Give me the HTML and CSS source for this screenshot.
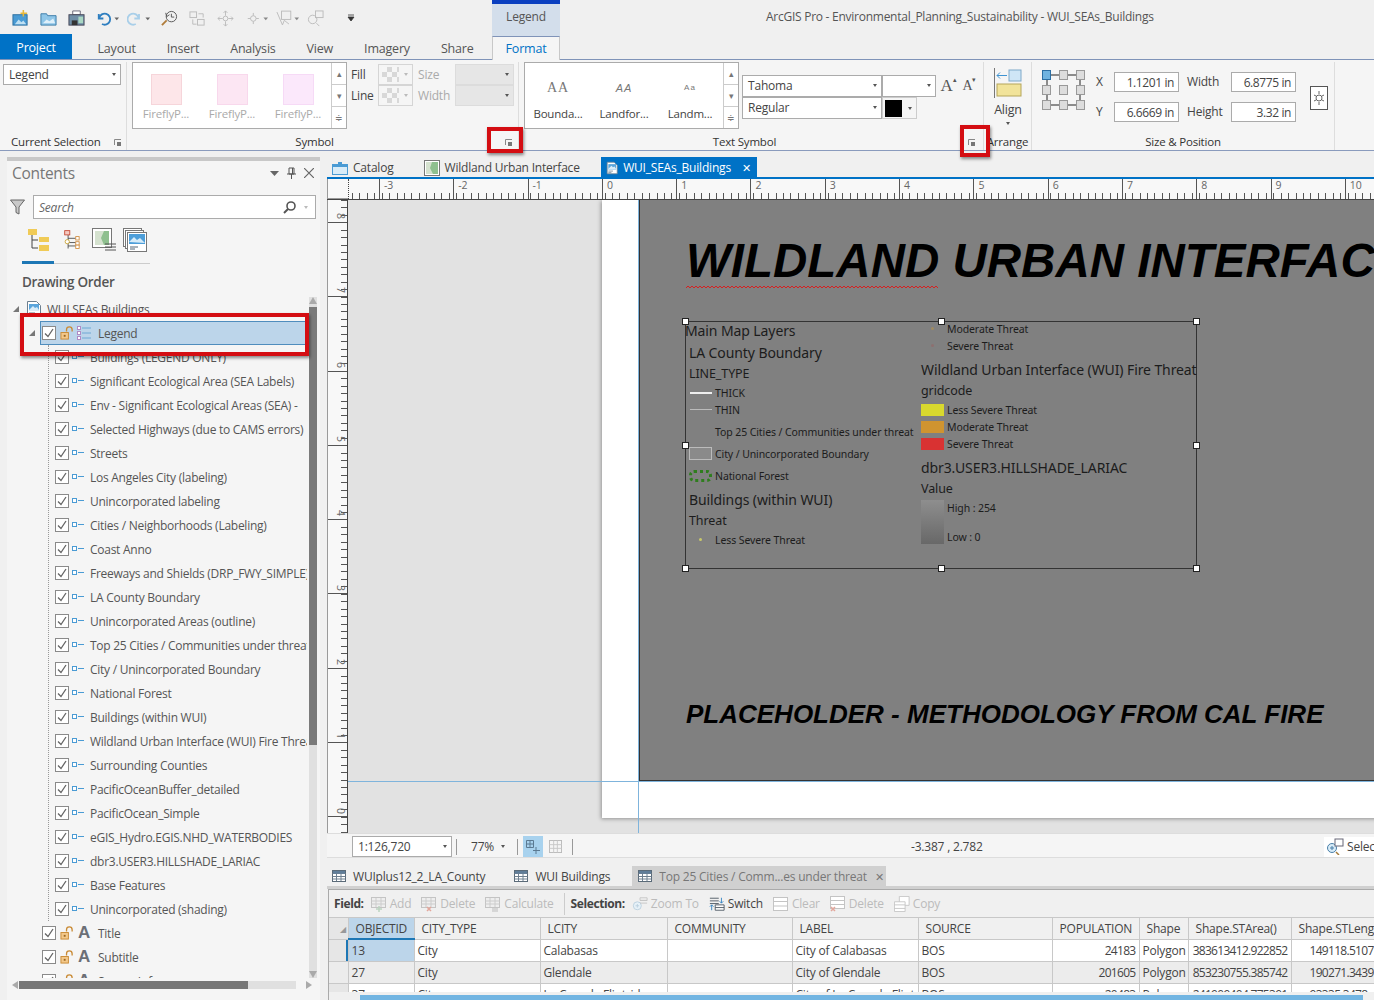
FILE: index.html
```html
<!DOCTYPE html>
<html lang="en">
<head>
  <meta charset="UTF-8">
  <title>ArcGIS Pro - Environmental_Planning_Sustainability - WUI_SEAs_Buildings</title>
  <link rel="stylesheet" href="styles.css">
</head>
<body>

<svg class="defs" width="0" height="0">
  <symbol id="chk" viewBox="0 0 14 14"><rect x=".5" y=".5" width="13" height="13" fill="#fff" stroke="#8a8a8a"/><path d="M3 7.500l3 3 5-7.500" fill="none" stroke="#666" stroke-width="1.300"/></symbol>
  <symbol id="lyr" viewBox="0 0 14 14"><rect x="1.500" y="4.500" width="4" height="4" fill="#fff" stroke="#4a9bd4"/><path d="M7 6.500h6" stroke="#4a9bd4"/></symbol>
  <symbol id="lock" viewBox="0 0 15 15"><rect x="1" y="7" width="8" height="7" fill="#f3c88a" stroke="#c98a34"/><path d="M7 6V4a3 3 0 0 1 6 0v2" fill="none" stroke="#c98a34" stroke-width="1.400"/><rect x="4" y="9.500" width="2" height="2" fill="#9a6620"/></symbol>
  <symbol id="tbl" viewBox="0 0 14 14"><rect x=".5" y="1.500" width="13" height="11" fill="#fff" stroke="#5a6a78"/><path d="M.5 4.500h13M.5 7.500h13M.5 10h13M4.500 2v10M9 2v10" stroke="#6f8090" fill="none"/><rect x="1" y="2" width="12" height="2.500" fill="#5f7d99"/></symbol>
  <symbol id="launch" viewBox="0 0 8 8"><path d="M.5 6V.5H7" fill="none" stroke="#888"/><rect x="3" y="3" width="4" height="4" fill="#777"/></symbol>
  <symbol id="mapdoc" viewBox="0 0 16 16"><path d="M1.500.5h9l4 4v11h-13z" fill="#fff" stroke="#6d7f8f"/><rect x="3" y="3" width="10" height="7" fill="#5aa5dc"/><path d="M3 9l4-4 2 2 2-1 2 3v1H3z" fill="#d9ecf8"/><path d="M3 12h6M3 14h4" stroke="#6d7f8f"/></symbol>
  <symbol id="grayrow" viewBox="0 0 14 14"><rect x=".5" y=".5" width="13" height="13" fill="none" stroke="#b9b9b9"/><path d="M.5 5h13M.5 9h13M5 .5v13M9 .5v13" stroke="#c8c8c8"/></symbol>
  <symbol id="fadd" viewBox="0 0 16 16"><rect x=".5" y="1.500" width="14" height="10" fill="#eee" stroke="#c4c4c4"/><path d="M.5 5h14M.5 8h14M5 2v9M10 2v9" stroke="#ccc"/><path d="M8 10v6M5 13h6" stroke="#bcd3c0" stroke-width="1.500"/></symbol>
  <symbol id="fdel" viewBox="0 0 16 16"><rect x=".5" y="1.500" width="14" height="10" fill="#eee" stroke="#c4c4c4"/><path d="M.5 5h14M.5 8h14M5 2v9M10 2v9" stroke="#ccc"/><path d="M6 11l4 4M10 11l-4 4" stroke="#e2a79c" stroke-width="1.500"/></symbol>
  <symbol id="fcalc" viewBox="0 0 16 16"><rect x=".5" y="1.500" width="14" height="10" fill="#eee" stroke="#c4c4c4"/><path d="M.5 5h14M.5 8h14M5 2v9M10 2v9" stroke="#ccc"/><path d="M7 13h6M7 15h6" stroke="#bbb"/></symbol>
  <symbol id="szoom" viewBox="0 0 18 16"><circle cx="6" cy="10" r="4.500" fill="#e6f1f8" stroke="#b9cfdd"/><path d="M4 10h4M6 8v4" stroke="#b9cfdd"/><path d="M9 1h8v3H9zM9 4h8M9 7h8" fill="none" stroke="#c4c4c4"/></symbol>
  <symbol id="sswitch" viewBox="0 0 18 16"><path d="M1 1.500h10M1 4.500h10M1 7.500h10" stroke="#4a5560"/><path d="M7 9h10v6H7zM7 12h10" fill="#fff" stroke="#4a5560"/><path d="M14 1v6M12 5l2 2 2-2M3 15V9M1 11l2-2 2 2" fill="none" stroke="#2f7fc0"/></symbol>
  <symbol id="sclear" viewBox="0 0 16 14"><rect x=".5" y=".5" width="14" height="13" fill="#fff" stroke="#c4c4c4"/><path d="M.5 4.500h14M.5 9h14" stroke="#c4c4c4"/></symbol>
  <symbol id="sdel" viewBox="0 0 16 16"><rect x=".5" y=".5" width="14" height="12" fill="#fff" stroke="#c4c4c4"/><path d="M.5 4.500h14M.5 8.500h14" stroke="#c4c4c4"/><path d="M1 11l4 4M5 11l-4 4" stroke="#e2a79c" stroke-width="1.500"/></symbol>
  <symbol id="scopy" viewBox="0 0 18 18"><path d="M6 .5h11v10H6z" fill="#fff" stroke="#c4c4c4"/><path d="M.5 6.500h12v11H.5z" fill="#fff" stroke="#c4c4c4"/><path d="M.5 10h12M.5 14h12" stroke="#c4c4c4"/></symbol>
</svg>

<div class="app">

  <!-- title bar + tabs -->
  <header class="topbar">
    <div class="qat">
      <svg class="qi" viewBox="0 0 18 18"><rect x="1" y="5" width="15" height="11" fill="#4a9bd4" stroke="#2d6f9f"/><path d="M3 15l4-5 3 3 2-2 3 4z" fill="#bfe0f3"/><path d="M12 0v7M9 3.500h7" stroke="#e8b93a" stroke-width="1.600"/></svg>
      <svg class="qi" viewBox="0 0 18 18"><path d="M1 4h6l1 2h9v10H1z" fill="#8fc6e8" stroke="#3a7ba8"/><path d="M3 14l4-4 3 2 4-3 2 5z" fill="#dff0fa"/></svg>
      <svg class="qi" viewBox="0 0 18 18"><path d="M5 1h8v4H5z" fill="#fff" stroke="#667"/><rect x="1" y="5" width="16" height="11" fill="#6f8ea6" stroke="#445"/><rect x="4" y="11" width="6" height="5" fill="#333"/><rect x="11" y="7" width="5" height="7" fill="#a9d7c3"/></svg>
      <svg class="qi wide" viewBox="0 0 26 18"><path d="M3 4v5h5" fill="none" stroke="#2f7fc0" stroke-width="2"/><path d="M3.500 8.500a6 6 0 1 1 3 6.500" fill="none" stroke="#2f7fc0" stroke-width="2"/><path d="M20 8h5l-2.500 3z" fill="#666"/></svg>
      <svg class="qi wide" viewBox="0 0 26 18"><path d="M13 4v5H8" fill="none" stroke="#a9cfe9" stroke-width="2"/><path d="M12.500 8.500a6 6 0 1 0-3 6.500" fill="none" stroke="#a9cfe9" stroke-width="2"/><path d="M20 8h5l-2.500 3z" fill="#666"/></svg>
      <svg class="qi hist" viewBox="0 0 18 18"><circle cx="11" cy="7" r="5.500" fill="none" stroke="#555"/><path d="M11 4v3.500h3M5 3l1 4 3-2" fill="none" stroke="#555"/><path d="M1 16l5-5" stroke="#b07c3a" stroke-width="2"/></svg>
      <svg class="qi" viewBox="0 0 18 18"><g fill="none" stroke="#bbb"><rect x="1" y="2" width="7" height="6"/><rect x="9" y="10" width="7" height="6"/><path d="M10 4h5v4M4 10v5h4"/></g></svg>
      <svg class="qi" viewBox="0 0 18 18"><g fill="none" stroke="#bbb"><circle cx="9" cy="9" r="2.500"/><path d="M9 1v5M9 12v5M1 9h5M12 9h5M7 3l2-2 2 2M7 15l2 2 2-2M3 7l-2 2 2 2M15 7l2 2-2 2"/></g></svg>
      <svg class="qi wide" viewBox="0 0 26 18"><g fill="none" stroke="#bbb"><circle cx="9" cy="9" r="3"/><path d="M3 9h3M12 9h3M9 3v3M9 12v3"/></g><path d="M20 8h5l-2.500 3z" fill="#888"/></svg>
      <svg class="qi wide" viewBox="0 0 26 18"><g fill="none" stroke="#bbb"><path d="M1 2l6 14 2-5 5 4"/><rect x="6" y="1" width="10" height="9"/></g><path d="M20 8h5l-2.500 3z" fill="#888"/></svg>
      <svg class="qi" viewBox="0 0 18 18"><g fill="none" stroke="#bbb"><circle cx="6" cy="10" r="4.500"/><rect x="9" y="1" width="8" height="7"/><path d="M10 14l3 3"/></g></svg>
      <svg class="qi more" viewBox="0 0 8 8"><path d="M1 1h6M1 3h6l-3 4z" fill="#333" stroke="#333" stroke-width=".8"/></svg>
    </div>

    <div class="ctx-label">Legend</div>
    <div class="app-title">ArcGIS Pro - Environmental_Planning_Sustainability - WUI_SEAs_Buildings</div>

    <nav class="tabs">
      <a class="tab project">Project</a>
      <a class="tab">Layout</a>
      <a class="tab">Insert</a>
      <a class="tab">Analysis</a>
      <a class="tab">View</a>
      <a class="tab">Imagery</a>
      <a class="tab">Share</a>
      <a class="tab format">Format</a>
    </nav>
  </header>

  <!-- ribbon -->
  <section class="ribbon">
    <div class="rgroup g-select">
      <div class="rbody"><div class="combo legend-combo">Legend<i class="caret"></i></div></div>
      <div class="rfoot"><span>Current Selection</span><svg class="launch l-sel"><use href="#launch"/></svg></div>
    </div>

    <div class="rgroup g-symbol">
      <div class="rbody">
        <div class="gallery g1">
          <div class="gitem muted"><b class="sw s1"></b>FireflyP...</div>
          <div class="gitem muted"><b class="sw s2"></b>FireflyP...</div>
          <div class="gitem muted"><b class="sw s3"></b>FireflyP...</div>
          <div class="gscroll"><i>▴</i><i>▾</i><i>≑</i></div>
        </div>
        <div class="fill-grid">
          <span>Fill</span><span class="swbtn"><u></u><i class="caret"></i></span><span class="muted">Size</span><span class="dis-combo"><i class="caret"></i></span>
          <span>Line</span><span class="swbtn"><u></u><i class="caret"></i></span><span class="muted">Width</span><span class="dis-combo"><i class="caret"></i></span>
        </div>
      </div>
      <div class="rfoot"><span>Symbol</span><svg class="launch l-sym"><use href="#launch"/></svg></div>
    </div>

    <div class="rgroup g-text">
      <div class="rbody">
        <div class="gallery g2">
          <div class="gitem"><em class="aa a1">AA</em>Bounda...</div>
          <div class="gitem"><em class="aa a2">AA</em>Landfor...</div>
          <div class="gitem"><em class="aa a3">Aa</em>Landm...</div>
          <div class="gscroll"><i>▴</i><i>▾</i><i>≑</i></div>
        </div>
        <div class="font-grid">
          <div class="combo fname">Tahoma<i class="caret"></i></div>
          <div class="combo fsize"><i class="caret"></i></div>
          <div class="fgrow">A<sup>▴</sup></div>
          <div class="fgrow small">A<sup>▾</sup></div>
          <div class="combo fname">Regular<i class="caret"></i></div>
          <div class="fcolor"><b></b><i class="caret"></i></div>
        </div>
      </div>
      <div class="rfoot"><span>Text Symbol</span><svg class="launch l-txt"><use href="#launch"/></svg></div>
    </div>

    <div class="rgroup g-arrange">
      <div class="rbody align-btn">
        <svg width="28" height="30" viewBox="0 0 28 30"><path d="M.5 0v30" stroke="#777"/><rect x="15" y="2" width="12" height="11" fill="#cfe6f6" stroke="#7fa9c9"/><path d="M3 7.500h10M3 7.500l3-3M3 7.500l3 3" stroke="#3f94d2" fill="none"/><rect x="3" y="16" width="24" height="12" fill="#f1e39a" stroke="#b5a65a"/></svg>
        <span>Align</span>
        <i class="caret"></i>
      </div>
      <div class="rfoot"><span>Arrange</span></div>
    </div>

    <div class="rgroup g-size">
      <div class="rbody">
        <svg class="anchor" width="43" height="40" viewBox="0 0 43 40">
          <path d="M5 5h33v30H5z" fill="none" stroke="#222"/>
          <g fill="#ddd" stroke="#999"><rect x="17.500" y=".5" width="8" height="9"/><rect x="34.500" y=".5" width="8" height="9"/><rect x=".5" y="15.500" width="8" height="9"/><rect x="17.500" y="15.500" width="8" height="9"/><rect x="34.500" y="15.500" width="8" height="9"/><rect x=".5" y="30.500" width="8" height="9"/><rect x="17.500" y="30.500" width="8" height="9"/><rect x="34.500" y="30.500" width="8" height="9"/></g>
          <rect x=".5" y=".5" width="8" height="9" fill="#6fb3e0" stroke="#2b6ea3"/>
        </svg>
        <div class="pos-grid">
          <span>X</span><span class="num">1.1201 in</span><span>Width</span><span class="num">6.8775 in</span>
          <span>Y</span><span class="num">6.6669 in</span><span>Height</span><span class="num">3.32 in</span>
        </div>
        <div class="lockbox"><svg width="12" height="14" viewBox="0 0 12 14"><g fill="none" stroke="#666"><circle cx="6" cy="7" r="3"/><path d="M1 4l2 1M11 4L9 5M1 10l2-1M11 10L9 9M6 0v3M6 11v3"/></g></svg></div>
      </div>
      <div class="rfoot"><span>Size &amp; Position</span></div>
    </div>
  </section>

  <main class="workspace">

    <!-- contents pane -->
    <aside class="pane">
      <div class="pane-head">
        <span class="pane-title">Contents</span>
        <span class="pane-btns">
          <svg width="9" height="5" viewBox="0 0 9 5"><path d="M0 0h9L4.500 5z" fill="#666"/></svg>
          <svg width="9" height="12" viewBox="0 0 9 12"><path d="M2 1h5v6H2zM0 7h9M4.500 7v5M5.500 1v6" fill="none" stroke="#555"/></svg>
          <svg width="10" height="10" viewBox="0 0 10 10"><path d="M0 0l10 10M10 0L0 10" stroke="#666" stroke-width="1.200"/></svg>
        </span>
      </div>
      <div class="search-row">
        <svg width="15" height="16" viewBox="0 0 15 16"><path d="M.5 1h14L9 8v7l-3-1.500V8z" fill="#c9c9c9" stroke="#666"/></svg>
        <div class="search"><em>Search</em>
          <svg width="13" height="13" viewBox="0 0 13 13"><circle cx="8" cy="5" r="4" fill="none" stroke="#555" stroke-width="1.600"/><path d="M5 8l-4 4" stroke="#555" stroke-width="2"/></svg>
          <i class="caret light"></i>
        </div>
      </div>
      <div class="view-tabs">
        <span class="vt on"><svg width="24" height="24" viewBox="0 0 24 24"><path d="M5 7v13h6M5 12h6" fill="none" stroke="#444"/><rect x="1" y="1" width="9" height="6" fill="#f0cb57"/><rect x="12" y="9" width="10" height="5" fill="#f0cb57"/><rect x="12" y="17" width="10" height="6" fill="#f0cb57"/></svg></span>
        <span class="vt"><svg width="17" height="24" viewBox="0 0 20 24"><path d="M6 6v16M6 10h9M6 19h9M7 15h8" fill="none" stroke="#444"/><rect x="2" y="1" width="6" height="5" fill="#f5c9c0" stroke="#c4452f"/><circle cx="5" cy="14" r="2.500" fill="#fff" stroke="#c9a02c"/><g fill="#fff" stroke="#d08a3a"><rect x="15" y="8" width="4" height="4"/><rect x="15" y="14" width="4" height="4"/><rect x="15" y="18" width="4" height="4"/></g></svg></span>
        <span class="vt"><svg width="24" height="24" viewBox="0 0 24 24"><rect x=".5" y=".5" width="19" height="19" fill="#fff" stroke="#777"/><rect x="3" y="3" width="14" height="14" fill="#8fc08f"/><path d="M3 3h9l-3 7 3 7H3z" fill="#d5e2cf"/><path d="M13 16h11M13 19h11M13 22h11" stroke="#555"/></svg></span>
        <span class="vt last"><svg width="24" height="24" viewBox="0 0 24 24"><g fill="#fff" stroke="#777"><rect x=".5" y=".5" width="18" height="18"/><rect x="2.500" y="2.500" width="18" height="18"/><rect x="4.500" y="4.500" width="19" height="19"/></g><rect x="6" y="6" width="16" height="10" fill="#4d9ed9"/><path d="M6 14l5-5 3 3 3-2 5 5z" fill="#d6ebf8"/><path d="M7 19h8M7 21h5" stroke="#567"/></svg></span>
      </div>
      <h3 class="order">Drawing Order</h3>

      <div class="tree-wrap">
        <div class="tree">
          <div class="row map"><i class="arrow"></i><svg class="ic16"><use href="#mapdoc"/></svg><span>WUI SEAs Buildings</span></div>
          <div class="row lvl selected"><i class="arrow"></i><svg class="ic14"><use href="#chk"/></svg><svg class="ic14 lk"><use href="#lock"/></svg>
            <svg class="ic14" viewBox="0 0 14 14"><g fill="none" stroke="#6fa8d4"><path d="M5 2h9M5 7h9M5 12h9"/></g><g fill="#fff" stroke="#b08ac4"><rect x=".5" y=".5" width="3" height="3"/><rect x=".5" y="5.500" width="3" height="3"/><rect x=".5" y="10.500" width="3" height="3"/></g></svg>
            <span>Legend</span></div>
          <div class="subs">
            <div class="row sub"><svg class="ic14"><use href="#chk"/></svg><svg class="ic14 li"><use href="#lyr"/></svg><span>Buildings (LEGEND ONLY)</span></div>
            <div class="row sub"><svg class="ic14"><use href="#chk"/></svg><svg class="ic14 li"><use href="#lyr"/></svg><span>Significant Ecological Area (SEA Labels)</span></div>
            <div class="row sub"><svg class="ic14"><use href="#chk"/></svg><svg class="ic14 li"><use href="#lyr"/></svg><span>Env - Significant Ecological Areas (SEA) -</span></div>
            <div class="row sub"><svg class="ic14"><use href="#chk"/></svg><svg class="ic14 li"><use href="#lyr"/></svg><span>Selected Highways (due to CAMS errors)</span></div>
            <div class="row sub"><svg class="ic14"><use href="#chk"/></svg><svg class="ic14 li"><use href="#lyr"/></svg><span>Streets</span></div>
            <div class="row sub"><svg class="ic14"><use href="#chk"/></svg><svg class="ic14 li"><use href="#lyr"/></svg><span>Los Angeles City (labeling)</span></div>
            <div class="row sub"><svg class="ic14"><use href="#chk"/></svg><svg class="ic14 li"><use href="#lyr"/></svg><span>Unincorporated labeling</span></div>
            <div class="row sub"><svg class="ic14"><use href="#chk"/></svg><svg class="ic14 li"><use href="#lyr"/></svg><span>Cities / Neighborhoods (Labeling)</span></div>
            <div class="row sub"><svg class="ic14"><use href="#chk"/></svg><svg class="ic14 li"><use href="#lyr"/></svg><span>Coast Anno</span></div>
            <div class="row sub"><svg class="ic14"><use href="#chk"/></svg><svg class="ic14 li"><use href="#lyr"/></svg><span>Freeways and Shields (DRP_FWY_SIMPLE)</span></div>
            <div class="row sub"><svg class="ic14"><use href="#chk"/></svg><svg class="ic14 li"><use href="#lyr"/></svg><span>LA County Boundary</span></div>
            <div class="row sub"><svg class="ic14"><use href="#chk"/></svg><svg class="ic14 li"><use href="#lyr"/></svg><span>Unincorporated Areas (outline)</span></div>
            <div class="row sub"><svg class="ic14"><use href="#chk"/></svg><svg class="ic14 li"><use href="#lyr"/></svg><span>Top 25 Cities / Communities under threat</span></div>
            <div class="row sub"><svg class="ic14"><use href="#chk"/></svg><svg class="ic14 li"><use href="#lyr"/></svg><span>City / Unincorporated Boundary</span></div>
            <div class="row sub"><svg class="ic14"><use href="#chk"/></svg><svg class="ic14 li"><use href="#lyr"/></svg><span>National Forest</span></div>
            <div class="row sub"><svg class="ic14"><use href="#chk"/></svg><svg class="ic14 li"><use href="#lyr"/></svg><span>Buildings (within WUI)</span></div>
            <div class="row sub"><svg class="ic14"><use href="#chk"/></svg><svg class="ic14 li"><use href="#lyr"/></svg><span>Wildland Urban Interface (WUI) Fire Threat</span></div>
            <div class="row sub"><svg class="ic14"><use href="#chk"/></svg><svg class="ic14 li"><use href="#lyr"/></svg><span>Surrounding Counties</span></div>
            <div class="row sub"><svg class="ic14"><use href="#chk"/></svg><svg class="ic14 li"><use href="#lyr"/></svg><span>PacificOceanBuffer_detailed</span></div>
            <div class="row sub"><svg class="ic14"><use href="#chk"/></svg><svg class="ic14 li"><use href="#lyr"/></svg><span>PacificOcean_Simple</span></div>
            <div class="row sub"><svg class="ic14"><use href="#chk"/></svg><svg class="ic14 li"><use href="#lyr"/></svg><span>eGIS_Hydro.EGIS.NHD_WATERBODIES</span></div>
            <div class="row sub"><svg class="ic14"><use href="#chk"/></svg><svg class="ic14 li"><use href="#lyr"/></svg><span>dbr3.USER3.HILLSHADE_LARIAC</span></div>
            <div class="row sub"><svg class="ic14"><use href="#chk"/></svg><svg class="ic14 li"><use href="#lyr"/></svg><span>Base Features</span></div>
            <div class="row sub"><svg class="ic14"><use href="#chk"/></svg><svg class="ic14 li"><use href="#lyr"/></svg><span>Unincorporated (shading)</span></div>
          </div>
          <div class="row lvl"><i class="arrow none"></i><svg class="ic14"><use href="#chk"/></svg><svg class="ic14 lk"><use href="#lock"/></svg><b class="big-a">A</b><span>Title</span></div>
          <div class="row lvl"><i class="arrow none"></i><svg class="ic14"><use href="#chk"/></svg><svg class="ic14 lk"><use href="#lock"/></svg><b class="big-a">A</b><span>Subtitle</span></div>
          <div class="row lvl"><i class="arrow none"></i><svg class="ic14"><use href="#chk"/></svg><svg class="ic14 lk"><use href="#lock"/></svg><b class="big-a">A</b><span>Source Info</span></div>
        </div>
        <div class="vscroll"><i class="up"></i><b></b><i class="down"></i></div>
      </div>
      <div class="hscroll"><i class="left"></i><b></b><i class="right"></i></div>
    </aside>

    <!-- layout view and table -->
    <section class="doc">
      <div class="doc-tabs">
        <span class="dtab"><svg width="16" height="14" viewBox="0 0 16 14"><path d="M0 3h6V1h4v2h6v11H0z" fill="#4a9bd4"/><rect x="1" y="6" width="14" height="7" fill="#d8ecf8"/></svg>Catalog</span>
        <span class="dtab"><svg width="16" height="16" viewBox="0 0 16 16"><rect x=".5" y=".5" width="15" height="15" fill="#fff" stroke="#777"/><rect x="2" y="2" width="12" height="12" fill="#8fc08f"/><path d="M2 2h6L6 8l3 6H2z" fill="#d5e2cf"/></svg>Wildland Urban Interface</span>
        <span class="dtab active"><svg width="16" height="16"><use href="#mapdoc"/></svg>WUI_SEAs_Buildings<i>✕</i></span>
      </div>

      <div class="hruler">
        <div class="corner"></div>
        <div class="hticks">
          <span class="lead"></span>
          <span>-3</span><span>-2</span><span>-1</span><span>0</span><span>1</span><span>2</span><span>3</span><span>4</span><span>5</span><span>6</span><span>7</span><span>8</span><span>9</span><span>10</span>
        </div>
      </div>

      <div class="view">
        <div class="vruler">
          <span class="lead">8</span>
          <span>7</span><span>6</span><span>5</span><span>4</span><span>3</span><span>2</span><span>1</span><span>0</span>
        </div>
        <div class="canvas">
          <div class="page"></div>
          <div class="frame"></div>
          <div class="guide gv"></div>
          <div class="guide gh"></div>
          <div class="map-title">WILDLAND URBAN INTERFACE</div>
          <svg class="squiggle" width="252" height="4">
            <defs><pattern id="wave" width="4" height="4" patternUnits="userSpaceOnUse"><path d="M0 3L2 1L4 3" fill="none" stroke="#d62020"/></pattern></defs>
            <rect width="252" height="4" fill="url(#wave)"/>
          </svg>
          <div class="map-sub">PLACEHOLDER - METHODOLOGY FROM CAL FIRE</div>

          <div class="legend">
            <div class="lg-col">
              <div class="lg-head flush">Main Map Layers</div>
              <div class="lg-head">LA County Boundary</div>
              <div class="lg-field">LINE_TYPE</div>
              <div class="lg-item"><i class="p"><b class="thick"></b></i>THICK</div>
              <div class="lg-item"><i class="p"><b class="thin"></b></i>THIN</div>
              <div class="lg-item sp"><i class="p"></i>Top 25 Cities / Communities under threat</div>
              <div class="lg-item sp"><i class="p"><b class="cityb"></b></i>City / Unincorporated Boundary</div>
              <div class="lg-item sp"><i class="p"><b class="forest"></b></i>National Forest</div>
              <div class="lg-head sp">Buildings (within WUI)</div>
              <div class="lg-field">Threat</div>
              <div class="lg-item"><i class="p"><b class="dot d1"></b></i>Less Severe Threat</div>
            </div>
            <div class="lg-col right">
              <div class="lg-item"><i class="p"><b class="dot d2"></b></i>Moderate Threat</div>
              <div class="lg-item"><i class="p"><b class="dot d3"></b></i>Severe Threat</div>
              <div class="lg-head sp">Wildland Urban Interface (WUI) Fire Threat</div>
              <div class="lg-field">gridcode</div>
              <div class="lg-item"><i class="p"><b class="box yel"></b></i>Less Severe Threat</div>
              <div class="lg-item"><i class="p"><b class="box org"></b></i>Moderate Threat</div>
              <div class="lg-item"><i class="p"><b class="box red"></b></i>Severe Threat</div>
              <div class="lg-head sp">dbr3.USER3.HILLSHADE_LARIAC</div>
              <div class="lg-field">Value</div>
              <div class="lg-ramp"><i></i><div><span>High : 254</span><span>Low : 0</span></div></div>
            </div>
            <u class="h tl"></u><u class="h tc"></u><u class="h tr"></u><u class="h ml"></u><u class="h mr"></u><u class="h bl"></u><u class="h bc"></u><u class="h br"></u>
          </div>
        </div>
      </div>

      <div class="status">
        <div class="combo scale">1:126,720<i class="caret"></i></div>
        <s></s>
        <span class="zoom">77%<i class="caret"></i></span>
        <s></s>
        <span class="st-on"><svg width="14" height="14" viewBox="0 0 14 14"><path d="M.5.5h7v7h-7zM4 .5v7M.500 4h7M10 7v7M7 10.500h7" fill="none" stroke="#5b7a92"/></svg></span>
        <svg class="st-grid" width="13" height="13"><use href="#grayrow"/></svg>
        <s></s>
        <span class="coords">-3.387 , 2.782</span>
        <span class="select"><svg width="18" height="17" viewBox="0 0 18 17"><circle cx="6" cy="10" r="4.500" fill="#d8ecf8" stroke="#4a7fa8"/><path d="M4 10h4M6 8v4" stroke="#4a7fa8"/><rect x="9" y="1" width="8" height="7" fill="#fff" stroke="#667"/><path d="M10 14l3 3" stroke="#a57b3a" stroke-width="1.500"/></svg>Select</span>
      </div>

      <div class="table-tabs">
        <span class="ttab"><svg class="ic14"><use href="#tbl"/></svg>WUIplus12_2_LA_County</span>
        <span class="ttab"><svg class="ic14"><use href="#tbl"/></svg>WUI Buildings</span>
        <span class="ttab active"><svg class="ic14"><use href="#tbl"/></svg>Top 25 Cities / Comm...es under threat<i>✕</i></span>
      </div>

      <div class="table-pane">
        <div class="tbar">
          <b>Field:</b>
          <span class="dim"><svg class="ti"><use href="#fadd"/></svg>Add</span>
          <span class="dim"><svg class="ti"><use href="#fdel"/></svg>Delete</span>
          <span class="dim"><svg class="ti"><use href="#fcalc"/></svg>Calculate</span>
          <s></s>
          <b>Selection:</b>
          <span class="dim"><svg class="ti"><use href="#szoom"/></svg>Zoom To</span>
          <span class="on"><svg class="ti"><use href="#sswitch"/></svg>Switch</span>
          <span class="dim"><svg class="ti"><use href="#sclear"/></svg>Clear</span>
          <span class="dim"><svg class="ti"><use href="#sdel"/></svg>Delete</span>
          <span class="dim"><svg class="ti"><use href="#scopy"/></svg>Copy</span>
        </div>
        <div class="grid-clip">
          <table class="grid">
            <colgroup><col class="c0"><col class="c1"><col class="c2"><col class="c3"><col class="c4"><col class="c5"><col class="c6"><col class="c7"><col class="c8"><col class="c9"><col class="c10"></colgroup>
            <thead>
              <tr><th class="gut">◢</th><th class="sel-h">OBJECTID</th><th>CITY_TYPE</th><th>LCITY</th><th>COMMUNITY</th><th>LABEL</th><th>SOURCE</th><th>POPULATION</th><th>Shape</th><th>Shape.STArea()</th><th>Shape.STLength()</th></tr>
            </thead>
            <tbody>
              <tr class="cur"><td class="gut mark"></td><td class="sel-c">13</td><td>City</td><td>Calabasas</td><td></td><td>City of Calabasas</td><td>BOS</td><td class="n">24183</td><td>Polygon</td><td class="n">383613412.922852</td><td class="n tail">149118.5107</td></tr>
              <tr class="alt"><td class="gut"></td><td>27</td><td>City</td><td>Glendale</td><td></td><td>City of Glendale</td><td>BOS</td><td class="n">201605</td><td>Polygon</td><td class="n">853230755.385742</td><td class="n tail">190271.3439</td></tr>
              <tr><td class="gut"></td><td>37</td><td>City</td><td>La Canada Flintridge</td><td></td><td>City of La Canada Flintridge</td><td>BOS</td><td class="n">20483</td><td>Polygon</td><td class="n">241909404.775391</td><td class="n tail">93335.3478</td></tr>
            </tbody>
          </table>
        </div>
        <div class="tscroll"><b></b></div>
      </div>
    </section>
  </main>

  <!-- red callouts drawn over the screenshot -->
  <div class="callout c-a"></div>
  <div class="callout c-b"></div>
  <div class="callout c-c"></div>
</div>

</body>
</html>
```

FILE: styles.css
```css
* {
  box-sizing: border-box;
}

html, body {
  margin: 0;
  padding: 0;
  overflow: hidden;
}

body {
  font-family: "Open Sans", "Noto Sans", sans-serif;
  font-size: 12px;
  letter-spacing: -0.2px;
  color: #444;
  background: #f0f0f0;
}

.defs {
  position: absolute;
}

.app {
  position: relative;
  width: 1374px;
  height: 1000px;
  overflow: hidden;
  display: flex;
  flex-direction: column;
}

.caret {
  display: inline-block;
  width: 0;
  height: 0;
  border-left: 2.5px solid transparent;
  border-right: 2.5px solid transparent;
  border-top: 3px solid #555;
}

.caret.light {
  border-top-color: #bbb;
}

/* top bar */

.topbar {
  position: relative;
  height: 60px;
  flex: none;
  background: #f0f0f0;
  border-bottom: 1px solid #7f93b8;
}

.qat {
  display: flex;
  align-items: center;
  height: 36px;
  padding-left: 12px;
  gap: 11px;
}

.qi {
  width: 17px;
  height: 17px;
  flex: none;
}

.qi.wide {
  width: 24px;
  margin-right: -4px;
}

.qi.hist {
  margin-left: 3px;
}

.qi.more {
  width: 8px;
  height: 8px;
  margin-left: 12px;
}

.ctx-label {
  position: absolute;
  left: 492px;
  top: 0;
  width: 68px;
  height: 36px;
  border-top: 4px solid #0a3fc0;
  background: #d3deeb;
  text-align: center;
  line-height: 26px;
  color: #555;
}

.app-title {
  position: absolute;
  left: 766px;
  top: 8px;
  color: #555;
  white-space: nowrap;
  letter-spacing: -0.26px;
}

.tabs {
  display: flex;
  height: 24px;
  margin-top: -1px;
}

.tab {
  padding: 2px 15.5px 0;
  line-height: 24px;
  font-size: 12.5px;
  color: #555;
  letter-spacing: -0.2px;
}

.tab.project {
  width: 72px;
  padding: 2px 0 0;
  margin-top: -1px;
  height: 25px;
  text-align: center;
  background: #0072c6;
  color: #fff;
  margin-right: 10px;
}

.tab.format {
  position: absolute;
  left: 492px;
  top: 36px;
  width: 68px;
  height: 24px;
  padding: 0;
  text-align: center;
  color: #0072c6;
  background: #f5f5f5;
  border-top: 1px solid #7f93b8;
  border-left: 1px solid #c8c8c8;
  border-right: 1px solid #c8c8c8;
}

/* ribbon */

.ribbon {
  display: flex;
  flex: none;
  height: 91px;
  background: #f5f5f5;
  border-bottom: 1px solid #8a9bbd;
}

.rgroup {
  display: flex;
  flex-direction: column;
  border-right: 1px solid #ddd;
  margin-top: 2px;
}

.rbody {
  display: flex;
  height: 73px;
}

.rfoot {
  position: relative;
  flex: 1;
  text-align: center;
  line-height: 14px;
  font-size: 11.5px;
  color: #333;
}

.launch {
  position: absolute;
  width: 8px;
  height: 8px;
  top: 4px;
}

.l-sel { left: 114px; }
.l-sym { left: 378px; }
.l-txt { left: 450px; }

.g-select {
  width: 127px;
}

.g-select .rfoot {
  text-align: left;
  padding-left: 11px;
}

.combo {
  position: relative;
  background: #fff;
  border: 1px solid #ababab;
  height: 21px;
  line-height: 19px;
  padding-left: 5px;
}

.combo .caret {
  position: absolute;
  right: 4px;
  top: 8px;
}

.legend-combo {
  width: 118px;
  margin: 2px 0 0 3px;
}

.g-symbol {
  width: 392px;
  border-right: 1px solid #ddd;
}

.g-symbol .rbody {
  padding-left: 5px;
}

.g-symbol .rfoot {
  padding-right: 16px;
}

.gallery {
  display: flex;
  background: #fff;
  border: 1px solid #ababab;
  height: 67px;
  padding-right: 15px;
  position: relative;
}

.g1 {
  width: 215px;
}

.g2 {
  width: 215px;
  margin-left: 6px;
}

.gitem {
  width: 66px;
  flex: none;
  display: flex;
  flex-direction: column;
  align-items: center;
  padding-top: 11px;
  font-size: 11.5px;
  white-space: nowrap;
}

.muted {
  color: #aaa;
}

.sw {
  width: 31px;
  height: 31px;
  margin-bottom: 1px;
  border: 1px solid;
}

.s1 { background: #fde6e9; border-color: #f6d5da; }
.s2 { background: #fce6f3; border-color: #f8d8ec; }
.s3 { background: #fbe8fb; border-color: #f6daf6; }

.gscroll {
  position: absolute;
  right: 0;
  top: 0;
  width: 15px;
  height: 65px;
  display: flex;
  flex-direction: column;
  border-left: 1px solid #ccc;
}

.gscroll i {
  flex: 1;
  font-style: normal;
  font-size: 9px;
  line-height: 21px;
  text-align: center;
  color: #777;
  border-bottom: 1px solid #ccc;
}

.gscroll i:last-child {
  border-bottom: 0;
}

.fill-grid {
  display: grid;
  grid-template-columns: 27px 35px 42px 59px;
  grid-auto-rows: 21px;
  margin: 2px 0 0 4px;
  line-height: 21px;
}

.fill-grid .muted {
  padding-left: 5px;
}

.swbtn {
  display: flex;
  align-items: center;
  gap: 5px;
  padding-left: 3px;
  border: 1px solid #d5d5d5;
}

.swbtn u {
  width: 17px;
  height: 15px;
  background: repeating-conic-gradient(#d8d8d8 0 25%, #f6f6f6 0 50%) 0 0 / 10px 10px;
}

.swbtn .caret {
  border-top-color: #bbb;
}

.dis-combo {
  background: #e6e6e6;
  border: 1px solid #dcdcdc;
  position: relative;
}

.dis-combo .caret {
  position: absolute;
  right: 4px;
  top: 8px;
}

.g-text {
  width: 466px;
  margin-left: -1px;
}

.g-text .rfoot {
  padding-right: 12px;
}

.aa {
  font-family: "Liberation Serif", serif;
  font-style: normal;
  height: 33px;
  line-height: 30px;
  font-size: 14px;
  color: #777;
  letter-spacing: 1px;
}

.a2 {
  font-family: "Liberation Sans", sans-serif;
  font-style: italic;
  font-size: 11px;
}

.a3 {
  font-family: "Liberation Sans", sans-serif;
  font-size: 8px;
}

.g2 .gitem {
  padding-top: 10px;
  color: #444;
}

.font-grid {
  display: grid;
  grid-template-columns: 140px 54px 21px 21px;
  grid-auto-rows: 22px;
  margin: 13px 0 0 3px;
}

.fname {
  height: 22px;
}

.fsize {
  height: 22px;
}

.fgrow {
  font-size: 17px;
  font-family: "Liberation Serif", serif;
  text-align: center;
  line-height: 22px;
  position: relative;
  color: #555;
}

.fgrow.small {
  font-size: 14px;
}

.fgrow sup {
  font-size: 7px;
  position: absolute;
  top: -2px;
  line-height: 14px;
}

.fcolor {
  display: flex;
  align-items: center;
  gap: 6px;
  height: 22px;
  width: 35px;
  padding-left: 2px;
  background: #f5f5f5;
  border: 1px solid #ccc;
}

.fcolor b {
  width: 17px;
  height: 17px;
  background: #000;
}

.g-arrange {
  width: 48px;
}

.align-btn {
  flex-direction: column;
  align-items: center;
  padding-top: 6px;
  padding-left: 1px;
}

.align-btn span {
  margin-top: 3px;
  font-size: 12.5px;
  line-height: 17px;
}

.align-btn .caret {
  margin-top: 4px;
}

.g-size {
  width: 303px;
}

.anchor {
  margin: 8px 0 0 10px;
  flex: none;
}

.pos-grid {
  display: grid;
  grid-template-columns: 18px 65px 52px 65px;
  grid-auto-rows: 20px;
  row-gap: 10px;
  margin: 10px 0 0 11px;
  line-height: 19px;
  white-space: nowrap;
}

.pos-grid > span:nth-child(3),
.pos-grid > span:nth-child(7) {
  padding-left: 8px;
}

.num {
  background: #fff;
  border: 1px solid #ababab;
  text-align: right;
  padding-right: 4px;
  letter-spacing: -0.4px;
}

.lockbox {
  width: 18px;
  height: 24px;
  margin: 24px 0 0 14px;
  border: 1px solid #555;
  background: #fff;
  display: flex;
  align-items: center;
  justify-content: center;
}

/* contents pane */

.workspace {
  flex: 1;
  display: flex;
  min-height: 0;
}

.pane {
  width: 313px;
  margin: 6px 0 0 7px;
  background: #f5f5f5;
  border-top: 4px solid #c8c8c8;
  flex: none;
  display: flex;
  flex-direction: column;
  overflow: hidden;
}

.pane-head {
  display: flex;
  justify-content: space-between;
  align-items: center;
  height: 24px;
  padding: 0 6px 0 5px;
}

.pane-title {
  font-size: 15.5px;
  color: #777;
  letter-spacing: -0.3px;
}

.pane-btns {
  display: flex;
  align-items: center;
  gap: 8px;
}

.search-row {
  display: flex;
  align-items: center;
  gap: 8px;
  padding: 10px 4px 0 3px;
}

.search {
  flex: 1;
  height: 24px;
  background: #fff;
  border: 1px solid #ababab;
  display: flex;
  align-items: center;
  padding: 0 7px 0 5px;
  gap: 8px;
}

.search em {
  flex: 1;
  color: #666;
}

.view-tabs {
  display: flex;
  width: 128px;
  height: 36px;
  margin: 9px 0 0 15px;
  padding-left: 5px;
  gap: 12px;
  border-bottom: 1px solid #ccc;
  position: relative;
}

.view-tabs::after {
  content: "";
  position: absolute;
  left: 0;
  bottom: -1px;
  width: 32px;
  height: 3px;
  background: #1d77b5;
}

.vt {
  display: block;
  height: 26px;
}

.vt.last {
  margin-left: -5px;
}

.order {
  margin: 8px 0 0 15px;
  font-size: 13.5px;
  font-weight: 600;
  color: #555;
  line-height: 20px;
  letter-spacing: -0.3px;
}

.tree-wrap {
  position: relative;
  height: 681px;
  margin-top: 5px;
  overflow: hidden;
}

.tree {
  height: 681px;
  overflow: hidden;
}

.row {
  display: flex;
  align-items: center;
  height: 24px;
  white-space: nowrap;
  overflow: hidden;
  color: #555;
  width: 300px;
  letter-spacing: -0.26px;
}

.row svg {
  flex: none;
}

.ic14 {
  width: 14px;
  height: 14px;
  flex: none;
}

.ic16 {
  width: 16px;
  height: 16px;
  flex: none;
}

.arrow {
  width: 0;
  height: 0;
  flex: none;
  border-left: 6px solid transparent;
  border-bottom: 6px solid #777;
}

.arrow.none {
  border-color: transparent;
}

.row.map {
  padding-left: 6px;
}

.row.map .ic16 {
  margin: 0 5px 0 7px;
}

.row.lvl {
  padding-left: 22px;
}

.row.lvl .ic14:first-of-type {
  margin-left: 7px;
}

.row.lvl .lk {
  margin-left: 4px;
  margin-right: 3px;
}

.row.lvl span {
  margin-left: 7px;
}

.row.selected {
  width: 267px;
  margin-left: 33px;
  padding-left: 0;
  background: #bcd5ea;
  border: 1px solid #4f8dbd;
  border-right: 0;
  position: relative;
  overflow: visible;
}

.row.selected .arrow {
  position: absolute;
  left: -12px;
}

.row.selected .ic14:first-of-type {
  margin-left: 1px;
}

.subs {
  position: relative;
  margin-left: 41px;
  border-left: 1px dotted #999;
  height: 576px;
}

.row.sub {
  padding-left: 6px;
  width: 258px;
  position: relative;
}

.row.sub .li {
  margin: 0 5px 0 2px;
}

.big-a {
  width: 14px;
  font-family: "Liberation Sans", sans-serif;
  font-size: 17px;
  font-weight: 700;
  color: #6b6f76;
  text-align: center;
  line-height: 14px;
}

.vscroll {
  position: absolute;
  right: 3px;
  top: 0;
  width: 8px;
  height: 681px;
  background: #e0e0e0;
  display: flex;
  flex-direction: column;
}

.vscroll b {
  display: block;
  height: 438px;
  background: #7b7b7b;
}

.vscroll i {
  display: block;
  width: 0;
  height: 0;
  border-left: 4px solid transparent;
  border-right: 4px solid transparent;
  flex: none;
}

.vscroll .up {
  border-bottom: 7px solid #aaa;
  margin-bottom: 3px;
}

.vscroll .down {
  border-top: 7px solid #aaa;
  position: absolute;
  bottom: 0;
}

.hscroll {
  position: relative;
  height: 8px;
  margin: 3px 8px 0 5px;
  display: flex;
  background: linear-gradient(#e0e0e0, #e0e0e0) 7px 0 / 277px 8px no-repeat;
}

.hscroll b {
  display: block;
  width: 229px;
  margin-left: 7px;
  background: #777;
}

.hscroll i {
  position: absolute;
  width: 0;
  height: 0;
  border-top: 4px solid transparent;
  border-bottom: 4px solid transparent;
}

.hscroll .left {
  left: 0;
  border-right: 6px solid #aaa;
}

.hscroll .right {
  right: 0;
  border-left: 6px solid #aaa;
}

/* document area */

.doc {
  flex: 1;
  min-width: 0;
  margin-left: 7px;
  display: flex;
  flex-direction: column;
}

.doc-tabs {
  display: flex;
  align-items: flex-end;
  height: 28px;
  padding-left: 5px;
  border-bottom: 2px solid #0072c6;
  flex: none;
}

.dtab {
  display: flex;
  align-items: center;
  gap: 5px;
  height: 20px;
  margin-right: 30px;
  padding-top: 1px;
  color: #444;
}

.dtab + .dtab {
  margin-right: 21px;
}

.dtab.active {
  background: #0072c6;
  color: #fff;
  padding: 1px 6px 0 5px;
  width: 156px;
  margin: 0;
  white-space: nowrap;
}

.dtab.active i {
  font-style: normal;
  margin-left: 6px;
  font-size: 11px;
}

.hruler {
  display: flex;
  flex: none;
  height: 21px;
  background: #f8f8f8;
  border-bottom: 1px solid #444;
}

.corner {
  width: 21px;
  flex: none;
  border-left: 1px solid #999;
  border-bottom: 1px solid #999;
}

.hticks {
  flex: 1;
  display: flex;
  overflow: hidden;
  background-image: repeating-linear-gradient(90deg, #555 0 1px, transparent 1px 7.43px);
  background-size: 100% 6px;
  background-position: 3.8px bottom;
  background-repeat: no-repeat;
}

.hticks span {
  width: 74.3px;
  flex: none;
  border-left: 1px solid #555;
  padding-left: 4px;
  font-size: 10.5px;
  line-height: 13px;
  color: #666;
}

.hticks .lead {
  width: 31px;
  border-left: 1px dotted #444;
}

.view {
  flex: none;
  height: 633px;
  display: flex;
}

.vruler {
  width: 21px;
  flex: none;
  background: #f8f8f8;
  border-right: 1px solid #444;
  border-left: 1px solid #999;
  background-image: repeating-linear-gradient(180deg, #555 0 1px, transparent 1px 7.43px);
  background-size: 6px 100%;
  background-position: right 0;
  background-repeat: no-repeat;
  display: flex;
  flex-direction: column;
  overflow: hidden;
}

.vruler span {
  height: 74.3px;
  flex: none;
  border-bottom: 1px solid #555;
  writing-mode: vertical-rl;
  font-size: 10.5px;
  text-align: right;
  line-height: 12px;
  padding-bottom: 3px;
  color: #666;
}

.vruler .lead {
  height: 23px;
}

.canvas {
  position: relative;
  flex: 1;
  background: #e2e2e2;
  overflow: hidden;
}

.page {
  position: absolute;
  left: 254px;
  top: 0;
  width: 800px;
  height: 618px;
  background: #fff;
  box-shadow: -1px 1px 4px rgba(0, 0, 0, 0.35);
}

.frame {
  position: absolute;
  left: 291px;
  top: 0;
  width: 760px;
  height: 581px;
  background: #808080;
  border-left: 1px solid #333;
  border-bottom: 1px solid #333;
}

.guide {
  position: absolute;
  background: #7fb4dc;
}

.gv {
  left: 290px;
  top: 0;
  width: 1px;
  height: 633px;
}

.gh {
  left: 0;
  top: 581px;
  width: 1026px;
  height: 1px;
}

.map-title,
.map-sub {
  position: absolute;
  font-family: "Liberation Sans", sans-serif;
  font-weight: 700;
  font-style: italic;
  color: #000;
  white-space: nowrap;
  letter-spacing: 0;
}

.map-title {
  left: 338px;
  top: 33px;
  font-size: 47.5px;
  line-height: 56px;
}

.squiggle {
  position: absolute;
  left: 338px;
  top: 85px;
}

.map-sub {
  left: 338px;
  top: 497px;
  font-size: 26px;
  line-height: 34px;
}

/* legend element on the layout */

.legend {
  position: absolute;
  left: 337px;
  top: 121px;
  width: 512px;
  height: 248px;
  border: 1px solid #333;
  display: flex;
  font-family: "Noto Sans", sans-serif;
  color: #1c1c1c;
  letter-spacing: -0.1px;
  white-space: nowrap;
}

.lg-col {
  margin-top: -2px;
  width: 234px;
  padding-left: 3px;
}

.lg-col.right {
  padding-left: 1px;
}

.lg-head {
  height: 22px;
  line-height: 22px;
  font-size: 14px;
}

.lg-head.flush {
  margin-left: -4px;
}

.lg-field {
  height: 20px;
  line-height: 20px;
  font-size: 12.5px;
}

.lg-item {
  display: flex;
  align-items: center;
  height: 17px;
  font-size: 10.5px;
}

.lg-head.sp,
.lg-item.sp {
  margin-top: 5px;
}

.p {
  width: 26px;
  height: 17px;
  flex: none;
  display: flex;
  align-items: center;
  justify-content: center;
  padding-right: 3px;
}

.thick {
  width: 22px;
  height: 2px;
  background: #eee;
}

.thin {
  width: 22px;
  height: 1px;
  background: #bbb;
}

.cityb {
  width: 23px;
  height: 13px;
  background: #8a8a8a;
  border: 1px solid #bbb;
}

.forest {
  width: 23px;
  height: 12px;
  border: 3px dotted #2f7d1e;
  border-radius: 5px;
}

.dot {
  width: 3px;
  height: 3px;
  border-radius: 50%;
}

.d1 { background: #c9c96a; }
.d2 { background: #a08a60; }
.d3 { background: #8d7070; }

.box {
  width: 23px;
  height: 12px;
}

.yel { background: #d9d92e; }
.org { background: #cf9430; }
.red { background: #d93232; }

.lg-ramp {
  display: flex;
  margin-top: 1px;
  height: 44px;
  font-size: 10.5px;
}

.lg-ramp i {
  width: 23px;
  background: linear-gradient(#8e8e8e, #686868);
  margin-right: 3px;
}

.lg-ramp div {
  display: flex;
  flex-direction: column;
  justify-content: space-between;
  padding: 1px 0 0;
}

.h {
  position: absolute;
  width: 7px;
  height: 7px;
  background: #fff;
  border: 1px solid #222;
}

.tl { left: -4px; top: -4px; }
.tc { left: 252px; top: -4px; }
.tr { right: -4px; top: -4px; }
.ml { left: -4px; top: 120px; }
.mr { right: -4px; top: 120px; }
.bl { left: -4px; bottom: -4px; }
.bc { left: 252px; bottom: -4px; }
.br { right: -4px; bottom: -4px; }

/* status bar */

.status {
  display: flex;
  align-items: center;
  height: 25px;
  flex: none;
  padding: 2px 0 0 25px;
  background: #f5f5f5;
  border-top: 1px solid #ddd;
  border-bottom: 1px solid #ddd;
  position: relative;
}

.status s {
  width: 1px;
  height: 16px;
  background: #999;
  margin: 0 0 0 4px;
}

.scale {
  width: 100px;
  height: 21px;
}

.zoom {
  padding: 0 8px 0 14px;
  display: flex;
  align-items: center;
  gap: 7px;
}

.st-on {
  display: flex;
  align-items: center;
  justify-content: center;
  width: 20px;
  height: 21px;
  background: #a8d2ee;
  margin-left: 5px;
}

.st-grid {
  margin-left: 6px;
  margin-right: 6px;
}

.coords {
  position: absolute;
  left: 584px;
}

.select {
  position: absolute;
  left: 997px;
  display: flex;
  gap: 3px;
  align-items: center;
  background: #fff;
  white-space: nowrap;
  height: 20px;
  padding-left: 2px;
  width: 60px;
}

.table-tabs {
  display: flex;
  align-items: flex-end;
  height: 31px;
  padding-left: 5px;
  flex: none;
  border-bottom: 3px solid #d0d0d0;
}

.ttab {
  display: flex;
  align-items: center;
  gap: 7px;
  height: 20px;
  margin-right: 29px;
  white-space: nowrap;
}

.ttab.active {
  margin: 0 0 0 -7px;
  width: 254px;
  padding-left: 6px;
  background: #d0d0d0;
  color: #777;
}

.ttab.active i {
  font-style: normal;
  margin-left: 1px;
  font-size: 11px;
}

.table-pane {
  flex: 1;
  min-height: 0;
  margin-left: 1px;
  border-left: 1px solid #aaa;
  border-top: 1px solid #aaa;
  position: relative;
  overflow: hidden;
}

.tbar {
  display: flex;
  align-items: center;
  gap: 10px;
  height: 28px;
  padding-left: 5px;
  border-bottom: 1px solid #c8c8c8;
}

.tbar b {
  font-weight: 700;
  color: #444;
  letter-spacing: -0.4px;
  margin-right: -3px;
}

.tbar span {
  display: flex;
  align-items: center;
  gap: 3px;
  white-space: nowrap;
}

.ti {
  width: 16px;
  height: 16px;
  flex: none;
}

.tbar .dim {
  color: #bbb;
}

.tbar .on {
  color: #444;
}

.tbar s {
  width: 1px;
  height: 22px;
  background: #ccc;
  margin-right: -4px;
}

.grid-clip {
  height: 74px;
  overflow: hidden;
}

.grid {
  table-layout: fixed;
  border-collapse: collapse;
  width: 1046px;
}

.c0 { width: 19px; }
.c1 { width: 66px; }
.c2 { width: 126px; }
.c3 { width: 127px; }
.c4 { width: 125px; }
.c5 { width: 126px; }
.c6 { width: 134px; }
.c7 { width: 87px; }
.c8 { width: 49px; }
.c9 { width: 103px; }
.c10 { width: 84px; }

.grid th,
.grid td {
  height: 22px;
  padding: 0 3px;
  overflow: hidden;
  white-space: nowrap;
  font-weight: 400;
  text-align: left;
  background: #fff;
  border-right: 1px solid #c8c8c8;
  border-bottom: 1px solid #c8c8c8;
  color: #444;
}

.grid th {
  height: 21px;
  background: #f0f0f0;
  padding-left: 7px;
}

.grid td.n {
  text-align: right;
  letter-spacing: -0.7px;
}

.grid td.tail {
  text-align: left;
  padding-left: 18px;
}

.grid tr.alt td {
  background: #ececec;
}

.grid .gut,
.grid td.gut {
  background: #e6e6e6;
  padding: 0 2px 0 0;
  color: #999;
  font-size: 8px;
  text-align: right;
}

.grid td.gut.mark {
  box-shadow: inset -2px 0 0 #1d77b5;
}

.grid .sel-h {
  background: #bcd5ea;
  border-bottom: 2px solid #1d77b5;
}

.grid tr.cur .sel-c {
  background: #bcd5ea;
}

.tscroll {
  position: absolute;
  left: 0;
  right: 0;
  bottom: 0;
  height: 5px;
  background: #f0f0f0;
}

.tscroll b {
  display: block;
  height: 5px;
  margin-left: 31px;
  width: 1003px;
  background: #72b5e2;
}

/* callouts */

.callout {
  position: absolute;
  border: 4px solid #d40d12;
  box-shadow: 1px 2px 3px rgba(0, 0, 0, 0.45);
}

.c-a { left: 487px; top: 127px; width: 36px; height: 26px; }
.c-b { left: 960px; top: 125px; width: 30px; height: 32px; }
.c-c { left: 20px; top: 313px; width: 289px; height: 43px; }
```
